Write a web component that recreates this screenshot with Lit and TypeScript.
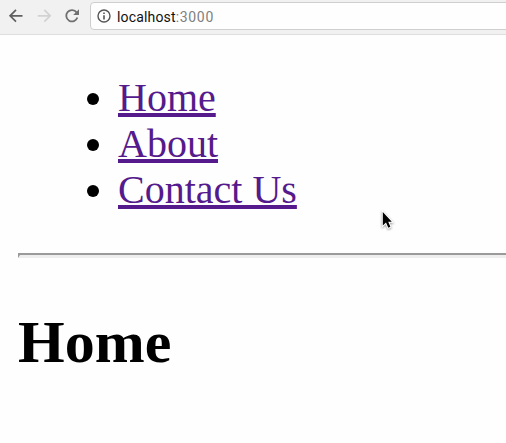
import { LitElement, html, css } from "lit";
import { customElement } from "lit/decorators.js";

@customElement("browser-toolbar")
class BrowserToolbar extends LitElement {
  static styles = css`
    :host { display: block; }
    .bar {
      box-sizing: border-box;
      height: 35px;
      display: flex;
      align-items: flex-start;
      background: #f1f1f1;
      border-bottom: 1px solid #dedede;
      overflow: hidden;
    }
    .nav { display: flex; flex: none; width: 90px; height: 32px; }
    .nav svg { display: block; }
    .address {
      box-sizing: border-box;
      flex: 1;
      height: 28px;
      margin: 2px -6px 0 0;
      padding-left: 6px;
      display: flex;
      align-items: center;
      background: #fefefe;
      border: 1px solid #cfcfcf;
      border-radius: 4px;
      font: 14px/26px Roboto, sans-serif;
      letter-spacing: 0.17px;
      color: #111;
    }
    .address svg { flex: none; margin-right: 6px; }
    .address span { padding-top: 1px; }
    .port { color: #808080; letter-spacing: 0.65px; }
  `;
  render() {
    return html`<div class="bar">
      <div class="nav">
        <svg width="90" height="32" viewBox="0 0 90 32" fill="none" stroke-width="1.7">
          <path stroke="#606060" d="M22.5 15.8H10.2M16 9.9L10.1 15.8L16 21.7" />
          <path stroke="#d2d2d2" d="M37.8 15.8H50.1M44.3 9.9L50.2 15.8L44.3 21.7" />
          <path stroke="#707070" stroke-width="1.8" d="M76.6 12.4A5.7 5.7 0 1 0 77.4 17.5" />
          <path fill="#707070" d="M79 9.2V15H73.2Z" />
        </svg>
      </div>
      <div class="address">
        <svg width="14" height="14" viewBox="0 0 14 14" fill="none" stroke="#555">
          <circle cx="7" cy="7" r="6" stroke-width="1.4" />
          <path stroke-width="1.6" d="M7 6.2V10.4M7 3.6V5.1" />
        </svg>
        <span>localhost<span class="port">:3000</span></span>
      </div>
    </div>`;
  }
}

@customElement("app-root")
class AppRoot extends LitElement {
  static styles = css`
    :host {
      display: block;
      position: relative;
      height: 443px;
      overflow: hidden;
      background: #fefefe;
      color: #000;
      font: 40px/46px "Liberation Serif", serif;
    }
    .page { padding: 40px 0 0 18px; }
    ul { margin: 0; padding: 0; list-style: none; }
    li { display: flex; align-items: center; height: 46px; }
    .dot {
      width: 12px;
      height: 12px;
      margin: 2px 19px 0 69px;
      border-radius: 50%;
      background: #000;
    }
    a {
      color: #551a8b;
      text-decoration: underline;
      text-decoration-thickness: 4px;
      text-underline-offset: 2px;
      text-decoration-skip-ink: none;
    }
    .rule {
      height: 0;
      margin: 40px -6px 0 0;
      border: solid;
      border-width: 2px 0 3px 2px;
      border-color: #9a9a9a #eee #eee #9a9a9a;
    }
    h1 { margin: 50px 0 0; font-size: 60px; line-height: 68px; }
    .cursor { position: absolute; left: 378px; top: 208px; }
    .cursor path { filter: drop-shadow(0 1px 1px rgba(0, 0, 0, 0.4)); }
  `;
  render() {
    return html`
      <browser-toolbar></browser-toolbar>
      <div class="page">
        <ul>
          ${["Home", "About", "Contact Us"].map(
            (t) => html`<li><span class="dot"></span><a href="#">${t}</a></li>`
          )}
        </ul>
        <div class="rule"></div>
        <h1>Home</h1>
      </div>
      <svg class="cursor" width="18" height="24" viewBox="0 0 18 24">
        <path
          d="M4.8 4V17.5L8 14.6L10.3 19.7L12.4 18.7L10.2 13.8H13.8Z"
          fill="#000" stroke="#fff" stroke-width="2" paint-order="stroke"
        />
      </svg>
    `;
  }
}
